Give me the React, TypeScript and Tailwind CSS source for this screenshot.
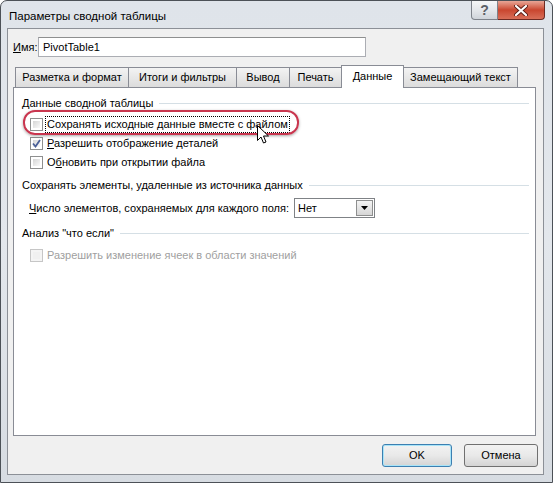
import React from "react";

const font = { fontFamily: '"Liberation Sans", Arial, sans-serif' };

function Check({ checked, disabled }: { checked?: boolean; disabled?: boolean }) {
  return (
    <div
      className={
        "w-[13px] h-[13px] shrink-0 border p-[2px] " +
        (disabled ? "border-[#c6c6c6] bg-[#f4f4f4]" : "border-[#8e8f8f] bg-white")
      }
    >
      <div
        className={
          "relative w-full h-full " +
          (disabled
            ? "bg-[#f0f0f0]"
            : "bg-gradient-to-br from-[#d5d5d5] to-[#fafafa]")
        }
      >
        {checked && (
          <svg className="absolute -left-[2px] -top-[2px]" width="11" height="11" viewBox="0 0 11 11">
            <path d="M2 5.5 L4.5 8.5 L9 2" fill="none" stroke="#4a5f97" strokeWidth="1.8" />
          </svg>
        )}
      </div>
    </div>
  );
}

function GroupHeader({ title, className = "" }: { title: string; className?: string }) {
  return (
    <div className={"flex items-center h-[16px] pl-[8px] pr-[6px] " + className}>
      <span className="shrink-0 whitespace-nowrap">{title}</span>
      <div className="flex-1 h-px bg-[#d5dfe5] ml-[6px] mt-px" />
    </div>
  );
}

function Tab({ label, width, active }: { label: string; width: string; active?: boolean }) {
  if (active) {
    return (
      <div
        className={
          width +
          " h-[23px] -mb-px relative z-10 bg-white border border-b-0 border-[#898c95] flex items-center justify-center pb-[1px] whitespace-nowrap"
        }
      >
        {label}
      </div>
    );
  }
  return (
    <div
      className={
        width +
        " h-[20px] border border-b-0 border-[#898c95] bg-gradient-to-b from-[#f3f3f3] to-[#dcdcdc] flex items-center justify-center -ml-px first:ml-0 whitespace-nowrap"
      }
    >
      {label}
    </div>
  );
}

export default function App() {
  return (
    <div
      className="w-[553px] h-[483px] flex flex-col text-[11px] text-black rounded-t-[7px] border border-[#4c5157] bg-gradient-to-b from-[#dfe4ea] via-[#e3e7ec] to-[#d7dce2] overflow-hidden select-none"
      style={font}
    >
      {/* Title bar */}
      <div className="h-[27px] flex items-start shrink-0">
        <div className="pl-[8px] pt-[7px] text-[11.5px] text-black whitespace-nowrap">Параметры сводной таблицы</div>
        <div className="ml-auto mr-[7px] flex">
          <div className="w-[27px] h-[19px] rounded-bl-[4px] border border-t-0 border-[#7d828a] bg-gradient-to-b from-[#f5f6f7] via-[#e4e7eb] to-[#cfd4da] flex items-center justify-center text-[#5b6066] text-[14px] font-bold">
            ?
          </div>
          <div className="w-[47px] h-[19px] rounded-br-[4px] border border-t-0 border-l-0 border-[#6e2a22] bg-gradient-to-b from-[#e7a596] via-[#c9462f] to-[#d86e58] flex items-center justify-center">
            <svg width="14" height="11" viewBox="0 0 14 11">
              <path d="M2 1 L12 10 M12 1 L2 10" stroke="#5c1f17" strokeWidth="4" strokeLinecap="round" />
              <path d="M2 1 L12 10 M12 1 L2 10" stroke="#ffffff" strokeWidth="2.2" strokeLinecap="round" />
            </svg>
          </div>
        </div>
      </div>

      {/* Client area */}
      <div className="flex-1 ml-[6px] mr-[8px] mb-[7px] border border-[#8c9097] bg-[#f0f0f0] flex flex-col">
        {/* Name row */}
        <div className="flex items-center mt-[8px] pl-[5px] h-[20px]">
          <span className="w-[25px]">
            <span className="underline">И</span>мя:
          </span>
          <div className="w-[328px] h-[20px] bg-white border border-[#abadb3] border-t-[#8e8f8f] flex items-center pl-[4px]">
            PivotTable1
          </div>
        </div>

        {/* Tabs */}
        <div className="flex items-end mt-[10px] ml-[7px] h-[20px]">
          <Tab label="Разметка и формат" width="w-[114px]" />
          <Tab label="Итоги и фильтры" width="w-[109px]" />
          <Tab label="Вывод" width="w-[54px]" />
          <Tab label="Печать" width="w-[53px]" />
          <Tab label="Данные" width="w-[63px] -ml-px" active />
          <Tab label="Замещающий текст" width="w-[115px]" />
        </div>

        {/* Panel */}
        <div className="relative ml-[5px] w-[523px] h-[349px] border border-[#898c95] bg-white">
          <GroupHeader title="Данные сводной таблицы" className="mt-[7px]" />

          <div className="flex items-center h-[16px] mt-[5px] pl-[16px]">
            <Check />
            <span className="ml-[3px] px-[1px] outline-1 outline-dotted outline-black leading-[15px] whitespace-nowrap">
              Сохранять исходные данные вместе с файлом
            </span>
          </div>
          <div className="flex items-center h-[16px] mt-[3px] pl-[16px]">
            <Check checked />
            <span className="ml-[4px] whitespace-nowrap">
              <span className="underline">Р</span>азрешить отображение деталей
            </span>
          </div>
          <div className="flex items-center h-[16px] mt-[3px] pl-[16px]">
            <Check />
            <span className="ml-[4px] whitespace-nowrap">
              О<span className="underline">б</span>новить при открытии файла
            </span>
          </div>

          <GroupHeader title="Сохранять элементы, удаленные из источника данных" className="mt-[7px]" />

          <div className="flex items-center h-[20px] mt-[5px] pl-[15px]">
            <span className="w-[265px] whitespace-nowrap">
              <span className="underline">Ч</span>исло элементов, сохраняемых для каждого поля:
            </span>
            <div className="w-[81px] h-[20px] bg-white border border-[#7f8286] flex items-center pl-[3px]">
              <span className="flex-1">Нет</span>
              <div className="w-[17px] h-[16px] mr-px border border-[#8e8f8f] bg-gradient-to-b from-[#f4f4f4] to-[#d6d6d6] flex items-center justify-center">
                <svg width="7" height="4" viewBox="0 0 7 4">
                  <path d="M0 0 H7 L3.5 4 Z" fill="#000" />
                </svg>
              </div>
            </div>
          </div>

          <GroupHeader title='Анализ "что если"' className="mt-[7px]" />

          <div className="flex items-center h-[16px] mt-[6px] pl-[16px] text-[#a0a0a0]">
            <Check disabled />
            <span className="ml-[4px] whitespace-nowrap">Разрешить изменение ячеек в области значений</span>
          </div>

          {/* red highlight annotation */}
          <div className="absolute left-[9px] top-[22px] w-[276px] h-[25px] rounded-[12px] border-2 border-[#c9364f] shadow-[0_1px_3px_rgba(0,0,0,0.35)] pointer-events-none" />

          {/* mouse cursor */}
          <svg className="absolute left-[243px] top-[37px]" width="13" height="20" viewBox="0 0 13 20">
            <path
              d="M0.5 0.5 L0.5 15.5 L4 12 L6.5 18 L9 17 L6.5 11 L11.5 11 Z"
              fill="#ffffff"
              stroke="#000000"
              strokeWidth="1"
              strokeLinejoin="round"
            />
          </svg>
        </div>

        {/* Buttons */}
        <div className="flex justify-end gap-[12px] mt-[8px] mr-[5px]">
          <div className="w-[70px] h-[23px] rounded-[3px] border border-[#3c7fb1] shadow-[inset_0_0_0_1px_#a8e4f8] bg-gradient-to-b from-[#f2f2f2] via-[#e9e9e9] to-[#d4d4d4] flex items-center justify-center">
            OK
          </div>
          <div className="w-[74px] h-[23px] rounded-[3px] border border-[#707070] bg-gradient-to-b from-[#f2f2f2] via-[#e9e9e9] to-[#d4d4d4] flex items-center justify-center">
            Отмена
          </div>
        </div>
      </div>
    </div>
  );
}
